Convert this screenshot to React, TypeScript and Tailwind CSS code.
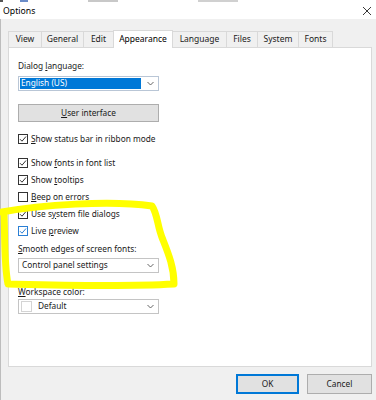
import React from "react";

const font = { fontFamily: '"Noto Sans", "Liberation Sans", sans-serif' };

function Check({ checked, blue }: { checked?: boolean; blue?: boolean }) {
  const c = blue ? "#2a7fd4" : "#333333";
  return (
    <div
      className="w-[10px] h-[10px] bg-white border flex items-center justify-center shrink-0"
      style={{ borderColor: c }}
    >
      {checked && (
        <svg width="8" height="8" viewBox="0 0 8 8">
          <path d="M1 4.2 L3 6.2 L7 1.5" fill="none" stroke={c} strokeWidth="1" />
        </svg>
      )}
    </div>
  );
}

function Chevron() {
  return (
    <svg width="7" height="5" viewBox="0 0 7 5" className="shrink-0">
      <path d="M0.5 1 L3.5 4 L6.5 1" fill="none" stroke="#555" strokeWidth="0.9" />
    </svg>
  );
}

function Row({ children, checked, blue }: { children: React.ReactNode; checked?: boolean; blue?: boolean }) {
  return (
    <div className="h-[14px] flex items-center gap-[3px] text-[8.3px] text-[#1a1a1a] leading-none">
      <Check checked={checked} blue={blue} />
      <span>{children}</span>
    </div>
  );
}

export default function App() {
  const tabs = ["View", "General", "Edit", "Appearance", "Language", "Files", "System", "Fonts"];
  const widths = [33, 42, 30, 59, 54, 31, 41, 34];
  return (
    <div className="w-[376px] h-[400px] relative overflow-hidden bg-[#f0f0f0] flex flex-col" style={font}>
      {/* title bar */}
      <div className="h-[19px] bg-white flex items-center justify-between pl-[3px] pr-[4px] relative">
        <span className="text-[8.7px] text-black leading-none mt-[3px]">Options</span>
        <svg width="10" height="10" viewBox="0 0 10 10" className="mt-[3px]">
          <path d="M1 1 L9 9 M9 1 L1 9" stroke="#222" strokeWidth="0.9" />
        </svg>
        <div className="absolute top-0 left-0 right-0 h-[2px] flex">
          <div className="w-[3px] bg-[#555]" />
          <div className="w-[17px]" />
          <div className="w-[8px] bg-[#6a8cc8]" />
          <div className="w-[60px]" />
          <div className="w-[30px] bg-[#c8c8c8]" />
          <div className="w-[80px]" />
          <div className="w-[40px] bg-[#d0d0d0]" />
        </div>
      </div>
      {/* body */}
      <div className="flex-1 flex flex-col pl-[7px] pr-[4px] pt-[11px] border-l border-[#bdbdbd]">
        <div className="flex items-end h-[17px] pl-[1px] relative z-10">
          {tabs.map((t, i) =>
            t === "Appearance" ? (
              <div
                key={t}
                className="h-[18px] -mb-px bg-white border border-b-0 border-[#d9d9d9] -ml-px flex items-center justify-center text-[8.5px] text-black leading-none"
                style={{ width: widths[i] + 1 }}
              >
                {t}
              </div>
            ) : (
              <div
                key={t}
                className="h-[16px] bg-[#f0f0f0] border border-b-0 border-[#d9d9d9] -ml-px flex items-center justify-center text-[8.5px] text-[#1a1a1a] leading-none"
                style={{ width: widths[i] + 1 }}
              >
                {t}
              </div>
            )
          )}
        </div>
        <div className="h-[320px] bg-white border border-[#d9d9d9] flex flex-col pl-[9px]">
          <div className="mt-[12px] h-[12px] flex items-center text-[8.3px] text-[#1a1a1a] leading-none">
            <span>
              Dialog <u>l</u>anguage:
            </span>
          </div>
          <div className="mt-[4px] w-[141px] h-[15px] border border-[#b9c6d6] bg-white flex items-center pl-[1px] pr-[4px]">
            <div className="flex-1 h-[11px] bg-[#0078d7] text-white text-[8.3px] leading-none flex items-center pl-[1px]">
              English (US)
            </div>
            <div className="w-[6px]" />
            <Chevron />
          </div>
          <div className="mt-[13px] w-[141px] h-[18px] border border-[#adadad] bg-[#e1e1e1] flex items-center justify-center text-[8.3px] text-[#1a1a1a] leading-none">
            <span>
              <u>U</u>ser interface
            </span>
          </div>
          <div className="mt-[10px]">
            <Row checked>
              <u>S</u>how status bar in ribbon mode
            </Row>
          </div>
          <div className="mt-[10px] flex flex-col gap-[3px]">
            <Row checked>
              Show <u>f</u>onts in font list
            </Row>
            <Row checked>
              Show <u>t</u>ooltips
            </Row>
            <Row>
              <u>B</u>eep on errors
            </Row>
            <Row checked>
              Use s<u>y</u>stem file dialogs
            </Row>
            <Row checked blue>
              Live <u>p</u>review
            </Row>
          </div>
          <div className="mt-[5px] h-[12px] flex items-center text-[8.3px] text-[#1a1a1a] leading-none">
            <span>
              <u>S</u>mooth edges of screen fonts:
            </span>
          </div>
          <div className="mt-[3px] w-[141px] h-[15px] border border-[#c4c4c4] bg-white flex items-center pl-[3px] pr-[4px] text-[8.3px] text-[#1a1a1a] leading-none">
            <span className="flex-1">Control panel settings</span>
            <Chevron />
          </div>
          <div className="mt-[13px] h-[12px] flex items-center text-[8.3px] text-[#1a1a1a] leading-none">
            <span>
              <u>W</u>orkspace color:
            </span>
          </div>
          <div className="mt-[1px] w-[141px] h-[15px] border border-[#c4c4c4] bg-white flex items-center pl-[2px] pr-[4px] text-[8.3px] text-[#1a1a1a] leading-none">
            <div className="w-[11px] h-[11px] border border-[#d4d4d4] bg-white mr-[6px]" />
            <span className="flex-1">Default</span>
            <Chevron />
          </div>
        </div>
        <div className="mt-[7px] flex justify-end gap-[8px]">
          <div className="w-[63px] h-[20px] border-2 border-[#0078d7] bg-[#e1e1e1] flex items-center justify-center text-[8.3px] text-[#1a1a1a] leading-none">
            OK
          </div>
          <div className="w-[65px] h-[20px] border border-[#adadad] bg-[#e1e1e1] flex items-center justify-center text-[8.3px] text-[#1a1a1a] leading-none">
            Cancel
          </div>
        </div>
      </div>
      {/* yellow annotation */}
      <svg className="absolute left-0 top-0 pointer-events-none" width="376" height="400" viewBox="0 0 376 400">
        <path
          d="M2 212 C 40 205, 110 200, 152 206 C 158 215, 157 226, 163 240 C 169 255, 174 268, 174 284 C 120 287, 50 285, 8 284 C 4 265, 5 235, 4 214"
          fill="none"
          stroke="#ffff00"
          strokeWidth="7"
          strokeLinecap="round"
          strokeLinejoin="round"
        />
      </svg>
    </div>
  );
}
